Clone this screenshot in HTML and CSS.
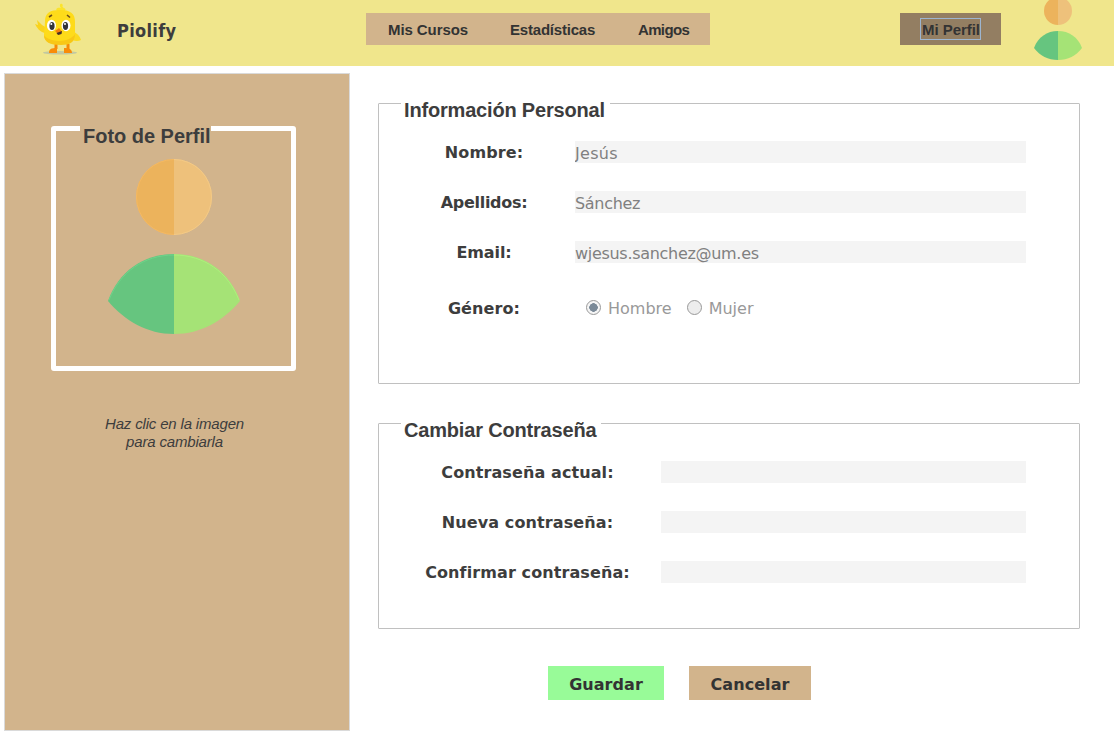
FILE: index.html
```html
<!DOCTYPE html>
<html lang="es">
<head>
<meta charset="utf-8">
<title>Piolify</title>
<link rel="stylesheet" href="styles.css">
</head>
<body>
<header class="topbar">
  <svg class="logo" viewBox="0 0 50 54" aria-hidden="true">
    <ellipse cx="26" cy="50.700" rx="17" ry="1.700" fill="#c3c9a0"/>
    <path d="M11 31C6 30 3 26 1 22L4 23L3 18L8 23C11 25 13 26 14 28Z" fill="#f9d31d"/>
    <path d="M38 29C43 31 46 34 47 38C43 40 38 39 35 35Z" fill="#fbd91e"/>
    <path d="M24 10C21 8 22 5 27 6C25 4 26 1 28 2C30 3 27 5 30 6C33 7 31 10 28 10Z" fill="#fbe32a"/>
    <path d="M22 42V47M34 42V47" stroke="#f58a07" stroke-width="3"/>
    <path d="M15 51C15 47 17 46 23 46V51ZM30 51V46C35 46 38 47 38 51Z" fill="#f98c08"/>
    <path d="M11 19C11 11 16 8 26 8C36 8 41 11 41 20L41 33C41 40 36 42 27 42C16 42 10 40 10 33C10 28 11 24 11 19Z" fill="#fedb1a"/>
    <path d="M10 33C14 40 35 42 41 32C41 40 36 43 27 43C16 43 10 40 10 33Z" fill="#f8c716"/>
    <ellipse cx="17.500" cy="23.500" rx="4.500" ry="5.800" fill="#fff"/>
    <ellipse cx="32" cy="23.500" rx="4.500" ry="5.800" fill="#fff"/>
    <ellipse cx="18" cy="24" rx="2.600" ry="4" fill="#33343b"/>
    <ellipse cx="31.500" cy="24" rx="2.600" ry="4" fill="#33343b"/>
    <circle cx="17.300" cy="22" r="1" fill="#fff"/><circle cx="31" cy="22" r="1" fill="#fff"/>
    <path d="M15 15L18 13M33 13L36 15.500" stroke="#6c4b1a" stroke-width="1.600"/>
    <path d="M21 29L25 26L28 29.500L25 33Z" fill="#f5820b"/>
    <path d="M22.500 31L28 29L27.500 32L24 33Z" fill="#442f26"/>
  </svg>
  <span class="brand">Piolify</span>
  <nav class="menu">
    <a class="courses">Mis Cursos</a><a class="stats">Estadísticas</a><a class="friends">Amigos</a>
  </nav>
  <button class="profile"><span class="focus">Mi Perfil</span></button>
  <svg class="mini" viewBox="0 0 48 60" aria-hidden="true">
    <path d="M24 -3A14 14 0 0 0 24 25Z" fill="#ecb35c"/><path d="M24 -3A14 14 0 0 1 24 25Z" fill="#eec17b"/>
    <path d="M24 31C13 31 4 37 0 48C6 56 14 60 24 60Z" fill="#66c57f"/><path d="M24 31C35 31 44 37 48 48C42 56 34 60 24 60Z" fill="#a5e376"/>
  </svg>
</header>
<main class="page">
  <aside class="side">
    <section class="photo">
      <h2 class="photo-title">Foto de Perfil</h2>
      <svg class="avatar" viewBox="0 0 132 176" aria-hidden="true">
        <path d="M66 1A38 38 0 0 0 66 77Z" fill="#ecb35c"/><path d="M66 1A38 38 0 0 1 66 77Z" fill="#eec17b"/>
        <path d="M66 1.500A37.500 37.500 0 0 0 66 76.500" fill="none" stroke="#f5b962"/><path d="M66 1.500A37.500 37.500 0 0 1 66 76.500" fill="none" stroke="#f4ca86"/>
        <path d="M66 96C35 96 10 114 0 143C17 163 39 176 66 176Z" fill="#66c57f"/><path d="M66 96C97 96 122 114 132 143C115 163 93 176 66 176Z" fill="#a5e376"/>
        <path d="M66 97C36 97 12 114 1 142" fill="none" stroke="#6dd48a"/><path d="M66 97C96 97 120 114 131 142" fill="none" stroke="#adf07c"/>
      </svg>
    </section>
    <p class="hint">Haz clic en la imagen<br>para cambiarla</p>
  </aside>
  <form class="content">
    <fieldset class="box personal">
      <legend><span>Información Personal</span></legend>
      <label class="row first-name"><span class="name">Nombre:</span><input value="Jesús"></label>
      <label class="row surname"><span class="name">Apellidos:</span><input value="Sánchez"></label>
      <label class="row email"><span class="name">Email:</span><input value="wjesus.sanchez@um.es"></label>
      <div class="row gender"><span class="name">Género:</span>
        <span class="radios"><i class="radio on"></i><span class="opt">Hombre</span><i class="radio"></i><span class="opt">Mujer</span></span></div>
    </fieldset>
    <fieldset class="box password">
      <legend><span>Cambiar Contraseña</span></legend>
      <label class="row"><span class="name">Contraseña actual:</span><input type="password"></label>
      <label class="row"><span class="name">Nueva contraseña:</span><input type="password"></label>
      <label class="row"><span class="name">Confirmar contraseña:</span><input type="password"></label>
    </fieldset>
    <div class="actions"><button type="button" class="save">Guardar</button><button type="button" class="cancel">Cancelar</button></div>
  </form>
</main>
</body>
</html>
```
FILE: styles.css
```css
* { box-sizing: border-box; }
body { margin: 0; width: 1114px; height: 733px; overflow: hidden; background: #fff; color: #3d3d3d; font-family: "DejaVu Sans", Verdana, sans-serif; font-size: 16px; }
button { border: 0; padding: 0; color: #333; }
.topbar { height: 66px; background: #f0e68c; display: flex; align-items: flex-start; }
.logo { width: 50px; height: 54px; margin: 2px 0 0 34px; flex: none; }
.brand { width: 249px; margin-left: 33px; font-family: "DejaVu Sans Condensed", "DejaVu Sans", sans-serif; font-size: 18px; font-weight: bold; line-height: 22px; padding-top: 20px; letter-spacing: 0.3px; }
.menu { display: flex; width: 344px; height: 32px; padding-left: 22px; background: #d2b48c; color: #333; font: bold 15px/34px "Liberation Sans", Arial, sans-serif; }
.courses { width: 122px; letter-spacing: -0.08px; }
.stats { width: 128px; letter-spacing: -0.2px; }
.friends { letter-spacing: -0.65px; }
.profile { width: 101px; height: 32px; margin-left: 190px; background: #937e62; font: bold 15px/22px "Liberation Sans", Arial, sans-serif; }
.menu, .profile { margin-top: 13px; flex: none; }
.focus { display: block; width: 61px; height: 22px; margin: 0 0 0 20px; padding-left: 1px; border: 1px solid #9db5d0; white-space: nowrap; text-align: left; letter-spacing: -0.05px; }
.mini { width: 48px; height: 60px; margin-left: 33px; flex: none; }
.page { display: flex; align-items: flex-start; padding: 7px 0 0 4px; }
.side { width: 346px; height: 658px; border: 1px solid #dadada; background: #d2b48c; padding: 52px 0 0 46px; flex: none; }
.photo { width: 245px; height: 245px; border: 5px solid #fff; border-radius: 3px; }
.photo-title { width: 131px; height: 22px; margin: -5px 0 0 24px; padding-left: 3px; background: #d2b48c; white-space: nowrap; font: bold 20px/20px "Liberation Sans", Arial, sans-serif; letter-spacing: -0.02px; }
.avatar { display: block; width: 132px; height: 176px; margin: 10px 0 0 52px; }
.hint { width: 247px; margin: 44px 0 0; text-align: center; font: italic 15px/18px "Liberation Sans", Arial, sans-serif; letter-spacing: -0.17px; }
.content { margin-left: 28px; width: 702px; }
.box { height: 281px; margin: 30px 0 0; padding: 37px 0 0; border: 1px solid #c0c0c0; border-radius: 1px; }
.box legend { float: left; height: 24px; margin: -50px 0 0 22px; padding: 0 5px 0 3px; background: #fff; font: bold 20px/24px "Liberation Sans", Arial, sans-serif; letter-spacing: -0.18px; }
.box legend span { position: relative; top: 7px; }
.row { clear: both; display: flex; align-items: center; height: 22px; margin-bottom: 28px; }
.name { width: 196px; padding-top: 1px; text-align: center; font-weight: bold; white-space: nowrap; letter-spacing: 0.1px; }
.personal .name { padding-left: 14px; }
.surname .name { letter-spacing: -0.3px; }
.email .name { letter-spacing: -0.1px; }
.row input { width: 451px; height: 22px; padding: 2px 0 0; border: 0; background: #f4f4f4; color: #808080; font: inherit; letter-spacing: -0.3px; }
.first-name input { letter-spacing: 0.3px; }
.password { height: 206px; margin-top: 39px; }
.password .name { width: 282px; padding-left: 15px; }
.password input { width: 365px; }
.gender { margin-top: 34px; }
.radios { display: flex; align-items: center; padding-left: 11px; color: #999; }
.radio { width: 15px; height: 15px; margin: -2px 7px 0 0; border: 1px solid #999; border-radius: 50%; background: #ededed; }
.opt { padding-top: 1px; margin-right: 15px; }
.on { background: radial-gradient(circle, #7b8a98 4px, #f5f5f5 4.5px); }
.actions { display: flex; gap: 25px; margin: 37px 0 0 170px; }
.actions button { height: 34px; width: 116px; padding: 2px 0 0; background: #98fb98; font: bold 16px "DejaVu Sans", Verdana, sans-serif; letter-spacing: 0.05px; }
.actions .cancel { width: 122px; background: #d2b48c; }
```
